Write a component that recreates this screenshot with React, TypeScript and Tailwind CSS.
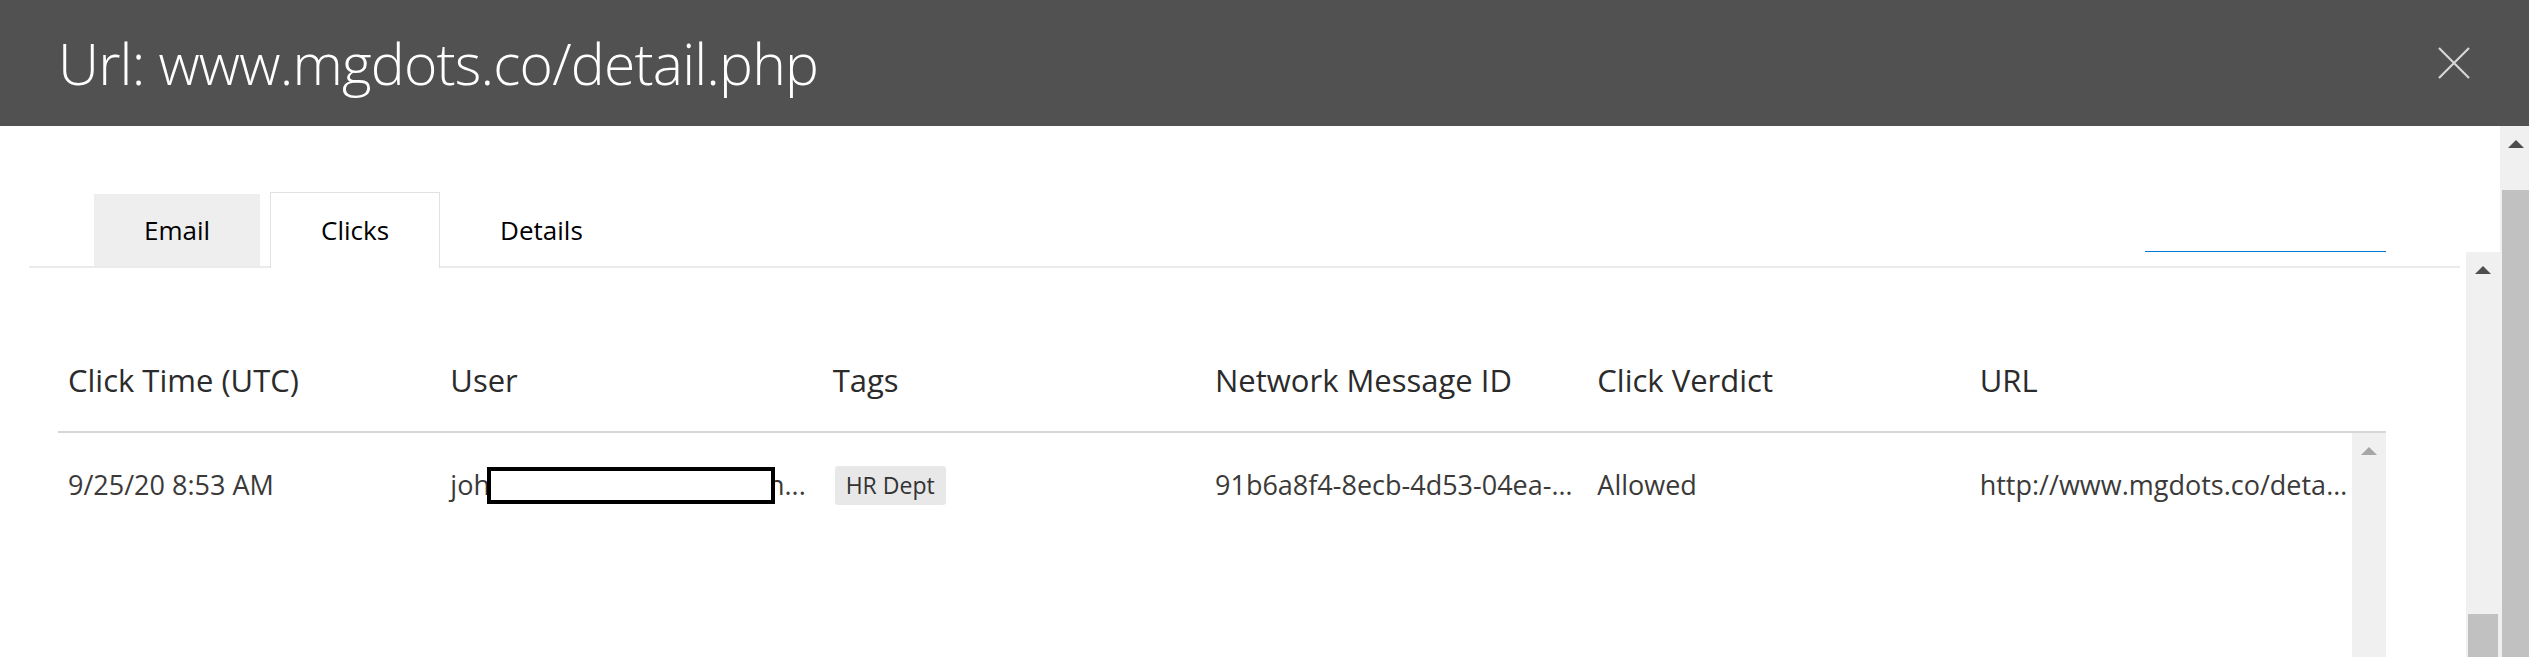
const FONT = { fontFamily: '"Open Sans", "Noto Sans", Arial, sans-serif' }

const TABS = [
  { id: 'email', label: 'Email' },
  { id: 'clicks', label: 'Clicks' },
  { id: 'details', label: 'Details' },
]

const COLUMNS = ['Click Time (UTC)', 'User', 'Tags', 'Network Message ID', 'Click Verdict', 'URL']

function UpArrow({ color }: { color: string }) {
  return (
    <svg width="16" height="8" viewBox="0 0 16 8" aria-hidden="true">
      <path d="M0 8 L8 0 L16 8 Z" fill={color} />
    </svg>
  )
}

function CloseIcon() {
  return (
    <svg width="32" height="32" viewBox="0 0 32 32" aria-hidden="true">
      <path d="M1 1 L31 31 M31 1 L1 31" stroke="#d6d6d6" strokeWidth="2.2" fill="none" />
    </svg>
  )
}

function Header() {
  return (
    <header className="flex h-[126px] shrink-0 items-center justify-between bg-[#515151] pl-[58px] pr-[59px]">
      <h1 className="text-[57px] leading-none font-light tracking-[-0.8px] text-white">Url: www.mgdots.co/detail.php</h1>
      <button type="button" aria-label="Close" className="flex h-[32px] w-[32px] items-center justify-center">
        <CloseIcon />
      </button>
    </header>
  )
}

function TabStrip() {
  return (
    <div className="mt-[66px] flex h-[76px] items-end border-b-2 border-[#ebebeb]">
      <div className="ml-[65px] flex items-end gap-[10px]">
        {TABS.map(({ id, label }) => {
          const active = id === 'clicks'
          return (
            <button
              key={id}
              type="button"
              className={[
                'flex items-center justify-center px-[50px] text-[26px] text-black',
                active
                  ? 'relative -mb-[2px] h-[76px] border border-b-0 border-[#e1e1e1] bg-white'
                  : id === 'email'
                    ? 'h-[72px] bg-[#eeeeee]'
                    : 'h-[72px]',
              ].join(' ')}
            >
              {label}
            </button>
          )
        })}
      </div>
      {/* поле поиска без текста — видна только синяя линия */}
      <div className="mb-[14px] ml-auto mr-[74px] w-[241px] border-b border-[#0078d4]" />
    </div>
  )
}

function ClicksTable() {
  return (
    <div className="ml-[29px] mr-[74px] flex min-h-0 flex-1 flex-col">
      <div className="grid h-[165px] shrink-0 grid-cols-[repeat(6,minmax(0,1fr))_34px] items-end border-b-2 border-[#d6d6d6] pb-[31px]">
        {COLUMNS.map((c) => (
          <div key={c} className="truncate pl-[10px] text-[31px] leading-[40px] text-[#2b2b2b]">
            {c}
          </div>
        ))}
        <div />
      </div>

      <div className="flex min-h-0 flex-1">
        <div className="grid flex-1 grid-cols-6 content-start pt-[32px] text-[27px] leading-[40px] text-[#3b3a39]">
          <div className="truncate pl-[10px] pr-[12px]">9/25/20 8:53 AM</div>
          <div className="flex items-center overflow-hidden whitespace-nowrap pl-[10px] pr-[12px]">
            <span>joh</span>
            <span className="relative z-10 -ml-[3px] h-[37px] w-[288px] shrink-0 border-[4px] border-black bg-white" />
            <span className="-ml-[7px]">n...</span>
          </div>
          <div className="flex items-center pl-[12px]">
            <span className="flex h-[39px] items-center rounded-[3px] bg-[#e8e8e8] px-[11px] text-[23px] text-[#333333]">
              HR Dept
            </span>
          </div>
          <div className="truncate pl-[10px] pr-[12px]">91b6a8f4-8ecb-4d53-04ea-08d860f31a44</div>
          <div className="truncate pl-[10px] pr-[12px]">Allowed</div>
          <div className="truncate pl-[10px] pr-[4px]">http://www.mgdots.co/detail.php</div>
        </div>
        <div className="flex w-[34px] shrink-0 justify-center bg-[#f0f0f0] pt-[14px]">
          <UpArrow color="#a6a6a6" />
        </div>
      </div>
    </div>
  )
}

export default function App() {
  return (
    <div className="flex h-[657px] w-full flex-col overflow-hidden bg-white" style={FONT}>
      <Header />
      <div className="flex min-h-0 flex-1">
        <div className="flex min-w-0 flex-1 flex-col pl-[29px] pr-[6px]">
          <TabStrip />
          <ClicksTable />
        </div>

        {/* внутренний скроллбар панели */}
        <div className="mt-[126px] flex w-[34px] shrink-0 flex-col items-center justify-between bg-[#f0f0f0] pt-[14px]">
          <UpArrow color="#4d4d4d" />
          <div className="h-[43px] w-[30px] bg-[#c1c1c1]" />
        </div>

        {/* внешний скроллбар окна */}
        <div className="flex w-[29px] shrink-0 flex-col bg-[#f0f0f0]">
          <div className="flex h-[64px] shrink-0 justify-center pl-[2px] pt-[14px]">
            <UpArrow color="#4d4d4d" />
          </div>
          <div className="ml-[2px] flex-1 bg-[#c1c1c1]" />
        </div>
      </div>
    </div>
  )
}
